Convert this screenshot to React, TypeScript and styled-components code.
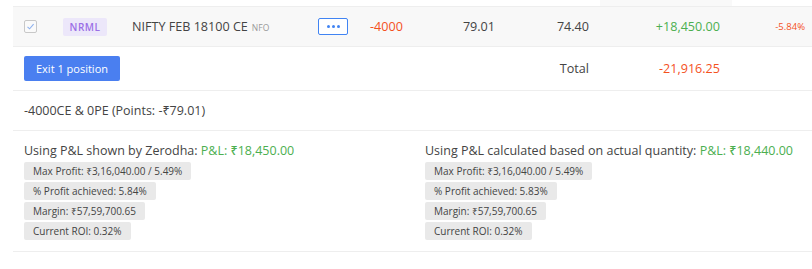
import React from 'react';
import styled, { createGlobalStyle } from 'styled-components';

const GlobalStyle = createGlobalStyle`
  html, body {
    margin: 0;
    padding: 0;
    background: #fff;
  }
  body {
    font-family: 'Open Sans', 'Noto Sans', sans-serif;
    color: #444;
    -webkit-font-smoothing: antialiased;
  }
`;

const Page = styled.div`
  width: 812px;
  padding-left: 13px;
  box-sizing: border-box;
`;

const COLS = '50px 69px 186px 52px 40px 85px 94px 131px 85px 7px';

const HeaderStrip = styled.div`
  display: grid;
  grid-template-columns: 587px 132px 1fr;
  height: 6px;
`;

const HeaderCell = styled.div<{ $active?: boolean }>`
  background: ${({ $active }) => ($active ? '#f9f9f9' : 'transparent')};
`;

const Row = styled.div<{ $shaded?: boolean }>`
  display: grid;
  grid-template-columns: ${COLS};
  align-items: center;
  height: ${({ $shaded }) => ($shaded ? '41px' : '44px')};
  background: ${({ $shaded }) => ($shaded ? '#f8f8f8' : '#fff')};
  border-top: ${({ $shaded }) => ($shaded ? '1px solid #eeeeee' : 'none')};
  border-bottom: 1px solid #eeeeee;
  box-sizing: border-box;
`;

const Cell = styled.div<{ $right?: boolean; $pad?: number }>`
  display: flex;
  align-items: center;
  justify-content: ${({ $right }) => ($right ? 'flex-end' : 'flex-start')};
  padding-left: ${({ $pad }) => ($pad ? `${$pad}px` : '0')};
  white-space: nowrap;
`;

const Checkbox = styled.span`
  width: 11px;
  height: 11px;
  border: 1px solid #c8c8c8;
  border-radius: 2px;
  background: #fafafa;
  display: flex;
  align-items: center;
  justify-content: center;
`;

const Badge = styled.span`
  display: inline-flex;
  align-items: center;
  justify-content: center;
  width: 44px;
  height: 18px;
  background: #ece7fa;
  color: #9b6fe6;
  font-size: 10px;
  font-weight: 600;
  letter-spacing: 0.5px;
  border-radius: 2px;
`;

const Instrument = styled.span`
  font-size: 12.6px;
  color: #444;
`;

const Exchange = styled.span`
  font-size: 8.5px;
  color: #999;
  margin-left: 4px;
  margin-top: 2px;
`;

const MoreButton = styled.span`
  width: 28px;
  height: 15px;
  border: 1px solid #4184f3;
  border-radius: 2px;
  background: #fff;
  display: flex;
  align-items: center;
  justify-content: center;
  gap: 2px;
`;

const Dot = styled.span`
  width: 3px;
  height: 3px;
  border-radius: 50%;
  background: #4184f3;
`;

const Num = styled.span<{ $tone?: 'loss' | 'profit'; $small?: boolean }>`
  font-size: ${({ $small }) => ($small ? '9.5px' : '12.6px')};
  color: ${({ $tone }) =>
    $tone === 'loss' ? '#f4511e' : $tone === 'profit' ? '#4caf50' : '#444'};
`;

const ExitButton = styled.button`
  grid-column: 1 / span 4;
  justify-self: start;
  margin-left: 11px;
  height: 25px;
  padding: 0 12px;
  border: none;
  border-radius: 2px;
  background: #4a7ff0;
  color: #fff;
  font-family: inherit;
  font-size: 11px;
`;

const Spacer = styled.div<{ $span: number }>`
  grid-column: span ${({ $span }) => $span};
`;

const Section = styled.div`
  border-bottom: 1px solid #eeeeee;
  padding: 0 11px;
`;

const Summary = styled(Section)`
  height: 39px;
  display: flex;
  align-items: center;
  font-size: 12.5px;
`;

const Breakdown = styled(Section)`
  display: grid;
  grid-template-columns: 401px 1fr;
  padding-top: 10px;
  padding-bottom: 11px;
`;

const Column = styled.div`
  display: flex;
  flex-direction: column;
  align-items: flex-start;
  gap: 2px;
`;

const Title = styled.div`
  font-size: 12.5px;
  line-height: 19px;
  white-space: nowrap;
`;

const Green = styled.span`
  color: #4caf50;
  font-weight: 500;
`;

const Chip = styled.span`
  display: inline-block;
  background: #e9e9e9;
  border-radius: 2px;
  padding: 0 9px;
  height: 18px;
  line-height: 18px;
  font-size: 10px;
  color: #444;
  white-space: nowrap;
`;

interface Stats {
  title: string;
  pnl: string;
  chips: string[];
}

const stats: Stats[] = [
  {
    title: 'Using P&L shown by Zerodha:',
    pnl: 'P&L: ₹18,450.00',
    chips: [
      'Max Profit: ₹3,16,040.00 / 5.49%',
      '% Profit achieved: 5.84%',
      'Margin: ₹57,59,700.65',
      'Current ROI: 0.32%',
    ],
  },
  {
    title: 'Using P&L calculated based on actual quantity:',
    pnl: 'P&L: ₹18,440.00',
    chips: [
      'Max Profit: ₹3,16,040.00 / 5.49%',
      '% Profit achieved: 5.83%',
      'Margin: ₹57,59,700.65',
      'Current ROI: 0.32%',
    ],
  },
];

const App: React.FC = () => (
  <Page>
    <GlobalStyle />
    <HeaderStrip>
      <HeaderCell />
      <HeaderCell $active />
      <HeaderCell />
    </HeaderStrip>
    <Row $shaded>
      <Cell $pad={11}>
        <Checkbox>
          <svg width="9" height="9" viewBox="0 0 9 9">
            <path d="M1.5 4.8 L3.6 6.8 L7.6 2.2" fill="none" stroke="#8fb2ee" strokeWidth="1.1" />
          </svg>
        </Checkbox>
      </Cell>
      <Cell>
        <Badge>NRML</Badge>
      </Cell>
      <Cell>
        <Instrument>NIFTY FEB 18100 CE</Instrument>
        <Exchange>NFO</Exchange>
      </Cell>
      <Cell>
        <MoreButton>
          <Dot />
          <Dot />
          <Dot />
        </MoreButton>
      </Cell>
      <Cell>
        <Num $tone="loss">-4000</Num>
      </Cell>
      <Cell $right>
        <Num>79.01</Num>
      </Cell>
      <Cell $right>
        <Num>74.40</Num>
      </Cell>
      <Cell $right>
        <Num $tone="profit">+18,450.00</Num>
      </Cell>
      <Cell $right>
        <Num $tone="loss" $small>-5.84%</Num>
      </Cell>
      <Cell />
    </Row>
    <Row>
      <ExitButton>Exit 1 position</ExitButton>
      <Spacer $span={2} />
      <Cell $right>
        <Num>Total</Num>
      </Cell>
      <Cell $right>
        <Num $tone="loss">-21,916.25</Num>
      </Cell>
      <Spacer $span={2} />
    </Row>
    <Summary>-4000CE &amp; 0PE (Points: -₹79.01)</Summary>
    <Breakdown>
      {stats.map((s) => (
        <Column key={s.title}>
          <Title>
            {s.title} <Green>{s.pnl}</Green>
          </Title>
          {s.chips.map((c) => (
            <Chip key={c}>{c}</Chip>
          ))}
        </Column>
      ))}
    </Breakdown>
  </Page>
);

export default App;
